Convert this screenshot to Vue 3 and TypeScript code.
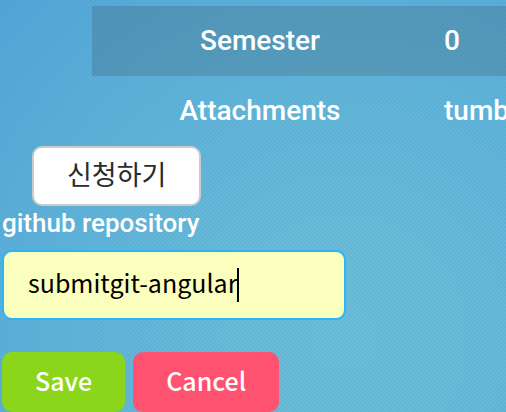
<script setup lang="ts">
import { ref } from 'vue'

interface Detail {
  label: string
  value: string
}

const details: Detail[] = [
  { label: 'Semester', value: '0' },
  { label: 'Attachments', value: 'tumb' },
]

const repository = ref('submitgit-angular')
</script>

<template>
  <main class="page">
    <table class="details">
      <tbody>
        <tr v-for="detail in details" :key="detail.label">
          <th scope="row">{{ detail.label }}</th>
          <td>{{ detail.value }}</td>
        </tr>
      </tbody>
    </table>
    <button type="button" class="button apply">신청하기</button>
    <form class="form" @submit.prevent>
      <label for="repository">github repository</label>
      <div class="field">
        <input id="repository" v-model="repository" type="text" spellcheck="false" autocomplete="off" />
        <div class="caret-line" aria-hidden="true">
          <span class="mirror">{{ repository }}</span><span class="caret"></span>
        </div>
      </div>
      <div class="actions">
        <button type="submit" class="button save">Save</button>
        <button type="button" class="button cancel">Cancel</button>
      </div>
    </form>
  </main>
</template>

<style>
body {
  margin: 0;
}
</style>

<style scoped>
.page {
  box-sizing: border-box;
  min-height: 100vh;
  padding-top: 6px;
  overflow: hidden;
  color: #fff;
  font-family: Roboto, 'Noto Sans CJK KR', sans-serif;
  font-size: 28px;
  background:
    conic-gradient(rgba(20, 90, 160, 0.06) 25%, transparent 0 50%, rgba(20, 90, 160, 0.06) 0 75%, transparent 0) 0 0 / 4px 4px,
    radial-gradient(circle at 68% 82%, #6bbdd8 0%, #69bbd8 25%, #5fb3d9 60%, #52a6d6 100%);
}

.details {
  width: calc(100% - 92px);
  margin-left: 92px;
  border-collapse: collapse;
  table-layout: fixed;
}

.details tr:nth-child(odd) {
  background: rgba(60, 80, 90, 0.24);
}

.details th,
.details td {
  box-sizing: border-box;
  height: 70px;
  padding: 0 16px;
  font-weight: 500;
  line-height: 32px;
  white-space: nowrap;
}

.details th {
  width: 336px;
  text-align: center;
}

.details td {
  padding-right: 0;
  text-align: left;
}

.button {
  box-sizing: border-box;
  height: 60px;
  padding: 0 33px 4px;
  border: 0;
  border-radius: 10px;
  color: #fff;
  font-family: 'Noto Sans CJK KR', sans-serif;
  font-size: 25px;
  font-weight: 500;
  line-height: 50px;
}

.apply {
  display: block;
  margin-left: 32px;
  padding: 0 33px 4px;
  border: 2px solid #ccc;
  background: #fff;
  color: #292b2c;
  font-size: 27px;
  font-weight: 400;
}

.form {
  padding: 0 2px;
}

.form label {
  display: block;
  padding-bottom: 10px;
  font-size: 26px;
  font-weight: 500;
  line-height: 34px;
}

.field {
  display: grid;
  width: 344px;
  max-width: 100%;
  font-family: 'Noto Sans CJK KR', sans-serif;
  font-size: 25px;
  line-height: 40px;
}

.field input,
.caret-line {
  box-sizing: border-box;
  grid-area: 1 / 1;
  width: 100%;
  height: 70px;
  padding: 0 24px;
  border: 2px solid transparent;
}

.field input {
  padding-bottom: 6px;
  border-color: #29b6f6;
  border-radius: 10px;
  outline: none;
  background: #faffbd;
  color: #000;
  font: inherit;
  caret-color: transparent;
}

.caret-line {
  display: flex;
  align-items: center;
  overflow: hidden;
  pointer-events: none;
}

.mirror {
  visibility: hidden;
  white-space: pre;
}

.caret {
  width: 2px;
  height: 34px;
  background: #000;
}

.actions {
  display: flex;
  gap: 8px;
  padding-top: 32px;
}

.save {
  background: #8bd61a;
}

.cancel {
  background: #ff5170;
}
</style>
